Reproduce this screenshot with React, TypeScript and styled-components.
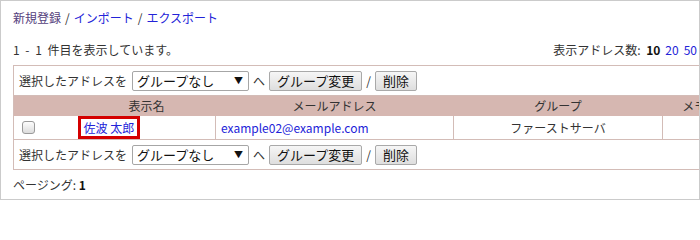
import React from "react"
import styled, { createGlobalStyle } from "styled-components"

const GlobalStyle = createGlobalStyle`
  body {
    margin: 0;
    font-family: "Noto Sans CJK JP", "Noto Sans", sans-serif;
    color: #333;
  }
`

const Frame = styled.div`
  width: 700px;
  height: 200px;
  box-sizing: border-box;
  border: 1px solid #cbcbcb;
  overflow: hidden;
  padding: 9px 0 0 12px;
  font-size: 12px;
  line-height: 16px;
`

const Nav = styled.div`
  height: 16px;
`

const Link = styled.a<{ $visited?: boolean }>`
  color: ${p => (p.$visited ? "#54407c" : "#2323d8")};
  text-decoration: none;
  cursor: pointer;
`

const Sep = styled.span`
  color: #333;
  margin: 0 4px;
`

const StatsRow = styled.div`
  width: 684px;
  margin-top: 16px;
  display: flex;
  justify-content: space-between;
  word-spacing: 3px;
`

const Counts = styled.div`
  display: flex;
  gap: 5px;
  align-items: baseline;
`

const Strong = styled.b`
  color: #111;
  font-weight: bold;
`

const Table = styled.table`
  margin-top: 7px;
  width: 713px;
  table-layout: fixed;
  border-collapse: collapse;
  border: 1px solid #d3bcb7;
`

const ActionCell = styled.td`
  height: 29px;
  padding: 0 5px;
  border-bottom: 1px solid #d3bcb7;
`

const Actions = styled.div`
  display: flex;
  align-items: center;
  gap: 4px;
  white-space: nowrap;
`

const SelectWrap = styled.span`
  position: relative;
  display: inline-block;
  margin-left: 1px;

  &::after {
    content: "▼";
    position: absolute;
    right: 6px;
    top: 4px;
    font-size: 9px;
    line-height: 12px;
    color: #111;
    pointer-events: none;
  }
`

const Select = styled.select`
  appearance: none;
  width: 117px;
  height: 20px;
  box-sizing: border-box;
  border: 1px solid #a6a6a6;
  border-radius: 2px;
  background: #fff;
  padding: 0 18px 0 4px;
  font-family: inherit;
  font-size: 13px;
  line-height: 18px;
  color: #111;
`

const Button = styled.button`
  height: 20px;
  box-sizing: border-box;
  padding: 0 7px;
  border: 1px solid #a9a9a9;
  border-radius: 2px;
  background: linear-gradient(#f6f6f6, #dedede);
  font-family: inherit;
  font-size: 13px;
  line-height: 18px;
  color: #111;
`

const Th = styled.th`
  height: 20px;
  padding: 0;
  background: #d6b7b1;
  font-weight: normal;
  text-align: center;
  color: #333;
  white-space: nowrap;
  overflow: hidden;
`

const Td = styled.td<{ $align?: "left" | "center"; $divider?: boolean }>`
  height: 22px;
  padding: 0 ${p => (p.$align === "center" ? 0 : 5)}px;
  text-align: ${p => p.$align || "left"};
  border-bottom: 1px solid #d3bcb7;
  border-left: ${p => (p.$divider ? "1px solid #d3bcb7" : "none")};
  white-space: nowrap;
`

const CheckCell = styled(Td)`
  padding-left: 8px;
`

const NameCell = styled(Td)`
  padding: 0;
`

const Check = styled.input`
  appearance: none;
  display: block;
  margin: 0;
  width: 13px;
  height: 13px;
  border: 1px solid #9a9a9a;
  border-radius: 3px;
  background: linear-gradient(#fdfdfd, #dcdcdc);
`

const Highlight = styled(Link)`
  display: inline-block;
  box-sizing: border-box;
  height: 23px;
  padding: 0 3px;
  border: 3px solid #d40000;
  line-height: 17px;
`

const Paging = styled.div`
  margin-top: 7px;
`

const ActionBar = () => (
  <Actions>
    <span>選択したアドレスを</span>
    <SelectWrap>
      <Select defaultValue="none">
        <option value="none">グループなし</option>
      </Select>
    </SelectWrap>
    <span>へ</span>
    <Button>グループ変更</Button>
    <span>/</span>
    <Button>削除</Button>
  </Actions>
)

const App = () => (
  <>
    <GlobalStyle />
    <Frame>
      <Nav>
        <Link $visited>新規登録</Link>
        <Sep>/</Sep>
        <Link>インポート</Link>
        <Sep>/</Sep>
        <Link>エクスポート</Link>
      </Nav>
      <StatsRow>
        <span>1 - 1 件目を表示しています。</span>
        <Counts>
          <span>
            表示アドレス数: <Strong>10</Strong>
          </span>
          <Link>20</Link>
          <Link>50</Link>
        </Counts>
      </StatsRow>
      <Table>
        <colgroup>
          <col style={{ width: 64 }} />
          <col style={{ width: 138 }} />
          <col style={{ width: 238 }} />
          <col style={{ width: 209 }} />
          <col style={{ width: 64 }} />
        </colgroup>
        <tbody>
          <tr>
            <ActionCell colSpan={5}>
              <ActionBar />
            </ActionCell>
          </tr>
          <tr>
            <Th />
            <Th>表示名</Th>
            <Th>メールアドレス</Th>
            <Th>グループ</Th>
            <Th>メモ</Th>
          </tr>
          <tr>
            <CheckCell>
              <Check type="checkbox" />
            </CheckCell>
            <NameCell>
              <Highlight>佐波 太郎</Highlight>
            </NameCell>
            <Td $divider>
              <Link>example02@example.com</Link>
            </Td>
            <Td $divider $align="center">
              ファーストサーバ
            </Td>
            <Td $divider />
          </tr>
          <tr>
            <ActionCell colSpan={5}>
              <ActionBar />
            </ActionCell>
          </tr>
        </tbody>
      </Table>
      <Paging>
        ページング: <Strong>1</Strong>
      </Paging>
    </Frame>
  </>
)

export default App
